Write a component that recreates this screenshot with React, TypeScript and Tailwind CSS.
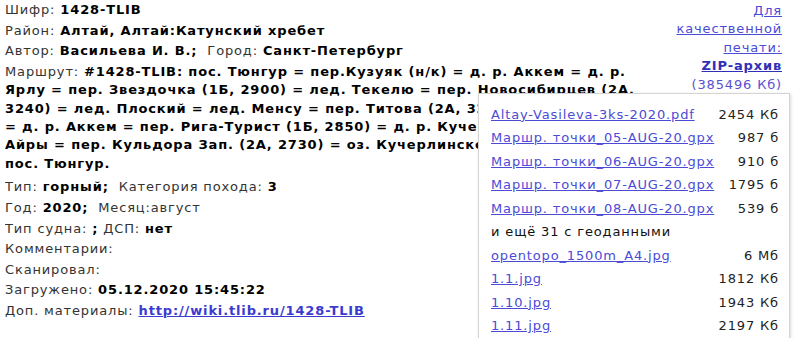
const files = [
  { name: "Altay-Vasileva-3ks-2020.pdf", size: "2454 Кб" },
  { name: "Маршр. точки_05-AUG-20.gpx", size: "987 б" },
  { name: "Маршр. точки_06-AUG-20.gpx", size: "910 б" },
  { name: "Маршр. точки_07-AUG-20.gpx", size: "1795 б" },
  { name: "Маршр. точки_08-AUG-20.gpx", size: "539 б" },
];

const more = [
  { name: "opentopo_1500m_A4.jpg", size: "6 Мб" },
  { name: "1.1.jpg", size: "1812 Кб" },
  { name: "1.10.jpg", size: "1943 Кб" },
  { name: "1.11.jpg", size: "2197 Кб" },
];

const Field = ({ label, children }: { label: string; children?: React.ReactNode }) => (
  <div>
    <span className="text-[#333]">{label}</span> <b className="text-black">{children}</b>
  </div>
);

const FileRow = ({ name, size }: { name: string; size: string }) => (
  <div className="flex h-[23.5px] items-center justify-between whitespace-nowrap">
    <a href="#" className="text-[#4b4bd6] underline">
      {name}
    </a>
    <span className="text-[#222]">{size}</span>
  </div>
);

export default function App() {
  return (
    <div className="relative h-[338px] w-[800px] overflow-hidden bg-white font-['DejaVu_Sans',Verdana,sans-serif] text-[13px] leading-[18.4px] tracking-[0.85px] text-[#333]">
      <div className="flex pl-[5px] pr-[18px]">
        <div className="flex w-[650px] flex-col gap-[2.2px] overflow-hidden pt-[1px]">
          <Field label="Шифр:">1428-TLIB</Field>
          <Field label="Район:">Алтай, Алтай:Катунский хребет</Field>
          <div>
            <span>Автор:</span> <b className="text-black">Васильева И. В.;</b>&nbsp; <span>Город:</span>{" "}
            <b className="text-black">Санкт-Петербург</b>
          </div>
          <div className="mb-[3px] whitespace-nowrap">
            <span>Маршрут:</span>{" "}
            <b className="text-black">
              #1428-TLIB: пос. Тюнгур = пер.Кузуяк (н/к) = д. р. Аккем = д. р.
              <br />
              Ярлу = пер. Звездочка (1Б, 2900) = лед. Текелю = пер. Новосибирцев (2А,
              <br />
              3240) = лед. Плоский = лед. Менсу = пер. Титова (2А, 3200) = лед.
              <br />
              = д. р. Аккем = пер. Рига-Турист (1Б, 2850) = д. р. Кучерла = р. Кара-
              <br />
              Айры = пер. Кульдора Зап. (2А, 2730) = оз. Кучерлинское = р.
              <br />
              пос. Тюнгур.
            </b>
          </div>
          <div>
            <span>Тип:</span> <b className="text-black">горный;</b>&nbsp; <span>Категория похода:</span>{" "}
            <b className="text-black">3</b>
          </div>
          <div>
            <span>Год:</span> <b className="text-black">2020;</b>&nbsp; <span>Месяц:август</span>
          </div>
          <div>
            <span>Тип судна:</span> <b className="text-black">;</b> <span>ДСП:</span>{" "}
            <b className="text-black">нет</b>
          </div>
          <div>Комментарии:</div>
          <div>Сканировал:</div>
          <Field label="Загружено:">05.12.2020 15:45:22</Field>
          <div>
            <span>Доп. материалы:</span>{" "}
            <a href="#" className="font-bold text-[#3b3bd0] underline">
              http://wiki.tlib.ru/1428-TLIB
            </a>
          </div>
        </div>
        <div className="ml-auto pt-[2px] text-right">
          <a href="#" className="text-[#4b4bd6] underline">
            Для
            <br />
            качественной
            <br />
            печати:
          </a>
          <br />
          <a href="#" className="font-bold text-[#2f2fb8] underline">
            ZIP-архив
          </a>
          <div className="text-[#5b4fd0]">(385496 Кб)</div>
        </div>
      </div>

      <div className="absolute left-[478px] top-[93px] h-[260px] w-[312px] border border-[#d4d4d4] bg-white pl-[12px] pr-[10px] pt-[9px] shadow-[1px_1px_3px_rgba(0,0,0,0.15)]">
        {files.map((f) => (
          <FileRow key={f.name} {...f} />
        ))}
        <div className="flex h-[23.5px] items-center text-[#111]">и ещё 31 с геоданными</div>
        {more.map((f) => (
          <FileRow key={f.name} {...f} />
        ))}
      </div>
    </div>
  );
}
